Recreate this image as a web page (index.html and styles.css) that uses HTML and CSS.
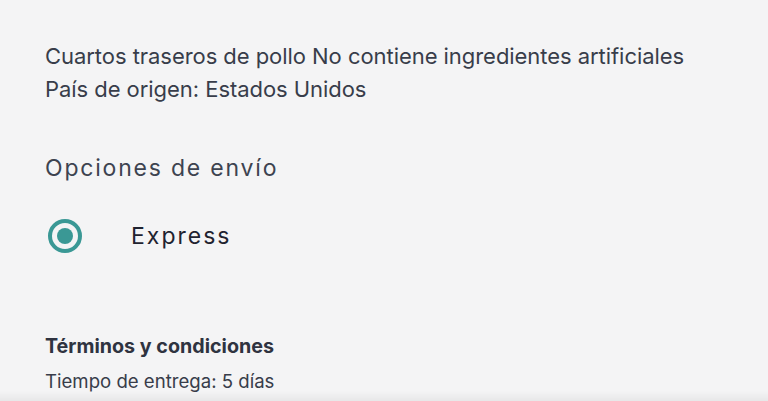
FILE: index.html
```html
<!DOCTYPE html>
<html lang="es">
<head>
<meta charset="utf-8">
<link rel="stylesheet" href="styles.css">
</head>
<body>
<main class="page">
  <p class="desc">Cuartos traseros de pollo No contiene ingredientes artificiales<br>País de origen: Estados Unidos</p>
  <h2 class="section-title">Opciones de envío</h2>
  <label class="option">
    <span class="radio"><span class="radio-dot"></span></span>
    <span class="option-label">Express</span>
  </label>
  <h3 class="terms-title">Términos y condiciones</h3>
  <p class="terms-text">Tiempo de entrega: 5 días</p>
</main>
<div class="bottom-shade"></div>
</body>
</html>
```
FILE: styles.css
```css
html, body {
  margin: 0;
  padding: 0;
  background: #f4f4f5;
}
body {
  font-family: Inter, "Noto Sans", sans-serif;
  color: #383d4a;
  overflow: hidden;
  height: 401px;
}
.page {
  padding: 40px 0 0 45px;
  display: flex;
  flex-direction: column;
}
.desc {
  margin: 0;
  font-size: 22px;
  line-height: 33px;
  letter-spacing: -0.05px;
}
.section-title {
  margin: 47px 0 0;
  font-size: 23px;
  font-weight: 400;
  line-height: 30px;
  letter-spacing: 1.8px;
  color: #3d4350;
}
.option {
  margin-top: 35px;
  display: flex;
  align-items: center;
  height: 36px;
}
.radio {
  width: 34px;
  height: 34px;
  box-sizing: border-box;
  border: 4px solid #3a9895;
  border-radius: 50%;
  display: flex;
  align-items: center;
  justify-content: center;
  margin-left: 3px;
}
.radio-dot {
  width: 16px;
  height: 16px;
  border-radius: 50%;
  background: #3a9895;
}
.option-label {
  margin-left: 49px;
  font-size: 23px;
  letter-spacing: 2px;
  color: #1f2330;
}
.terms-title {
  margin: 79px 0 0;
  font-size: 19.7px;
  font-weight: 700;
  line-height: 26px;
  color: #2f3340;
}
.terms-text {
  margin: 9px 0 0;
  font-size: 18.6px;
  line-height: 26px;
  letter-spacing: 0;
}
.bottom-shade {
  position: fixed;
  left: 0;
  right: 0;
  bottom: 0;
  height: 10px;
  background: linear-gradient(to bottom, rgba(0,0,0,0), rgba(0,0,0,0.05));
  pointer-events: none;
}
```
